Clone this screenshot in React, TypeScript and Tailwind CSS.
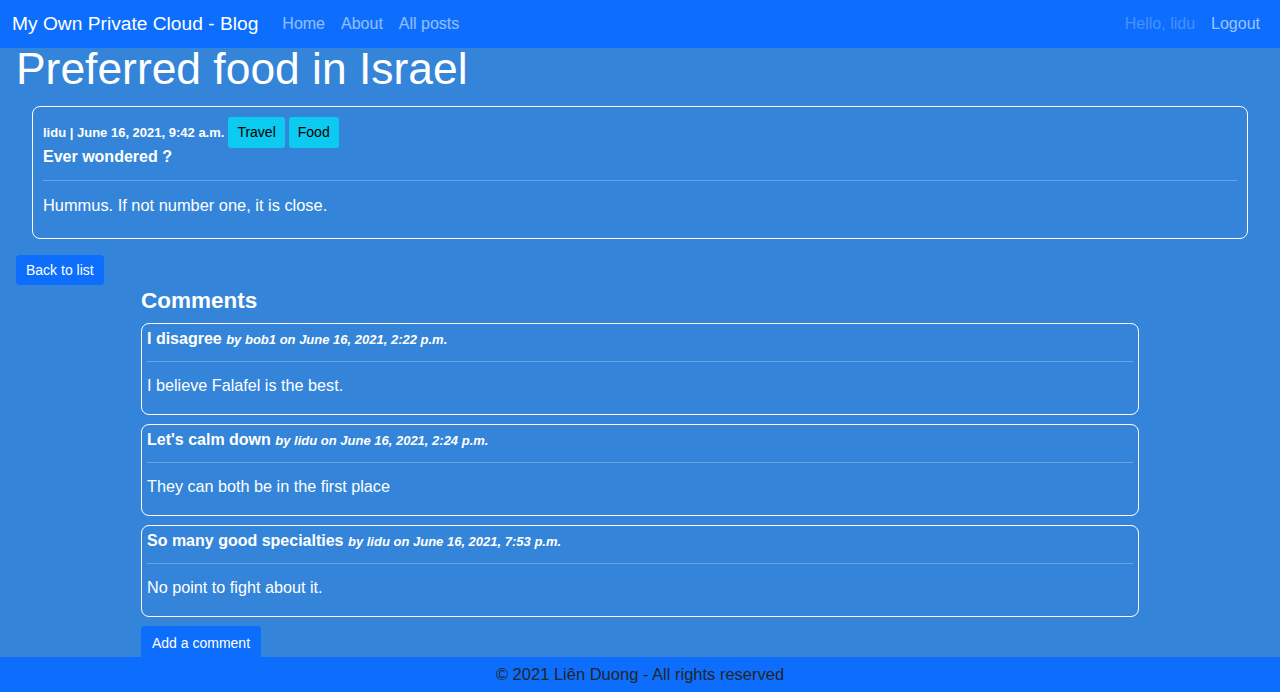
const comments = [
  { title: 'I disagree', author: 'bob1', date: 'June 16, 2021, 2:22 p.m.', body: 'I believe Falafel is the best.' },
  { title: "Let's calm down", author: 'lidu', date: 'June 16, 2021, 2:24 p.m.', body: 'They can both be in the first place' },
  { title: 'So many good specialties', author: 'lidu', date: 'June 16, 2021, 7:53 p.m.', body: 'No point to fight about it.' },
]

export default function App() {
  return (
    <div className="min-h-[692px] bg-[#3485d9] pb-[40px] font-['Liberation_Sans',Arial,sans-serif] text-white">
      <nav className="flex h-[48px] items-center bg-[#0d6efd] px-[12px]">
        <span className="mr-[16px] text-[19.2px] text-white">My Own Private Cloud - Blog</span>
        <div className="flex text-[16px] text-white/55">
          <a className="px-[8px]">Home</a>
          <a className="px-[8px]">About</a>
          <a className="px-[8px]">All posts</a>
        </div>
        <div className="ml-auto flex text-[16px]">
          <span className="px-[8px] text-white/25">Hello, lidu</span>
          <a className="px-[8px] text-white/60">Logout</a>
        </div>
      </nav>

      <div className="px-[16px]">
        <h1 className="text-[44.4px] leading-[42px]">Preferred food in Israel</h1>

        <div className="mx-[16px] mt-[16px] rounded-[8px] border border-white px-[10px] pb-[23px] pt-[10px]">
          <div className="flex items-center gap-[4px]">
            <span className="text-[13px] font-bold">lidu | June 16, 2021, 9:42 a.m.</span>
            <span className="rounded-[3px] bg-[#0dcaf0] px-[9px] py-[6px] text-[14px] leading-[19px] text-black">Travel</span>
            <span className="rounded-[3px] bg-[#0dcaf0] px-[9px] py-[6px] text-[14px] leading-[19px] text-black">Food</span>
          </div>
          <p className="text-[16px] font-bold leading-[18px]">Ever wondered ?</p>
          <hr className="my-[14px] border-white/25" />
          <p className="text-[16.4px] leading-[20px]">Hummus. If not number one, it is close.</p>
        </div>

        <button className="mt-[16px] rounded-[4px] bg-[#0d6efd] px-[10px] py-[6px] text-[14px] leading-[18px] text-white">
          Back to list
        </button>
      </div>

      <div className="mx-auto w-[998px]">
        <h2 className="mb-[8px] mt-[2px] text-[22.5px] font-bold leading-[28px]">Comments</h2>
        <div className="flex flex-col gap-[9px]">
          {comments.map((c) => (
            <div key={c.title} className="h-[92px] rounded-[8px] border border-white px-[5px] pt-[6px]">
              <div className="leading-[18px]">
                <span className="text-[16px] font-bold">{c.title}</span>{' '}
                <span className="text-[13px] font-bold italic">
                  by {c.author} on {c.date}
                </span>
              </div>
              <hr className="mb-[13px] mt-[12px] border-white/25" />
              <p className="text-[16.2px] leading-[20px]">{c.body}</p>
            </div>
          ))}
        </div>
        <button className="mt-[9px] rounded-[4px] bg-[#0d6efd] px-[11px] py-[8px] text-[14px] leading-[18px] text-white">
          Add a comment
        </button>
      </div>

      <footer className="fixed bottom-0 left-0 flex h-[35px] w-full items-center justify-center bg-[#0d6efd] text-[16.5px] text-[#212529]">
        © 2021 Liên Duong - All rights reserved
      </footer>
    </div>
  )
}
